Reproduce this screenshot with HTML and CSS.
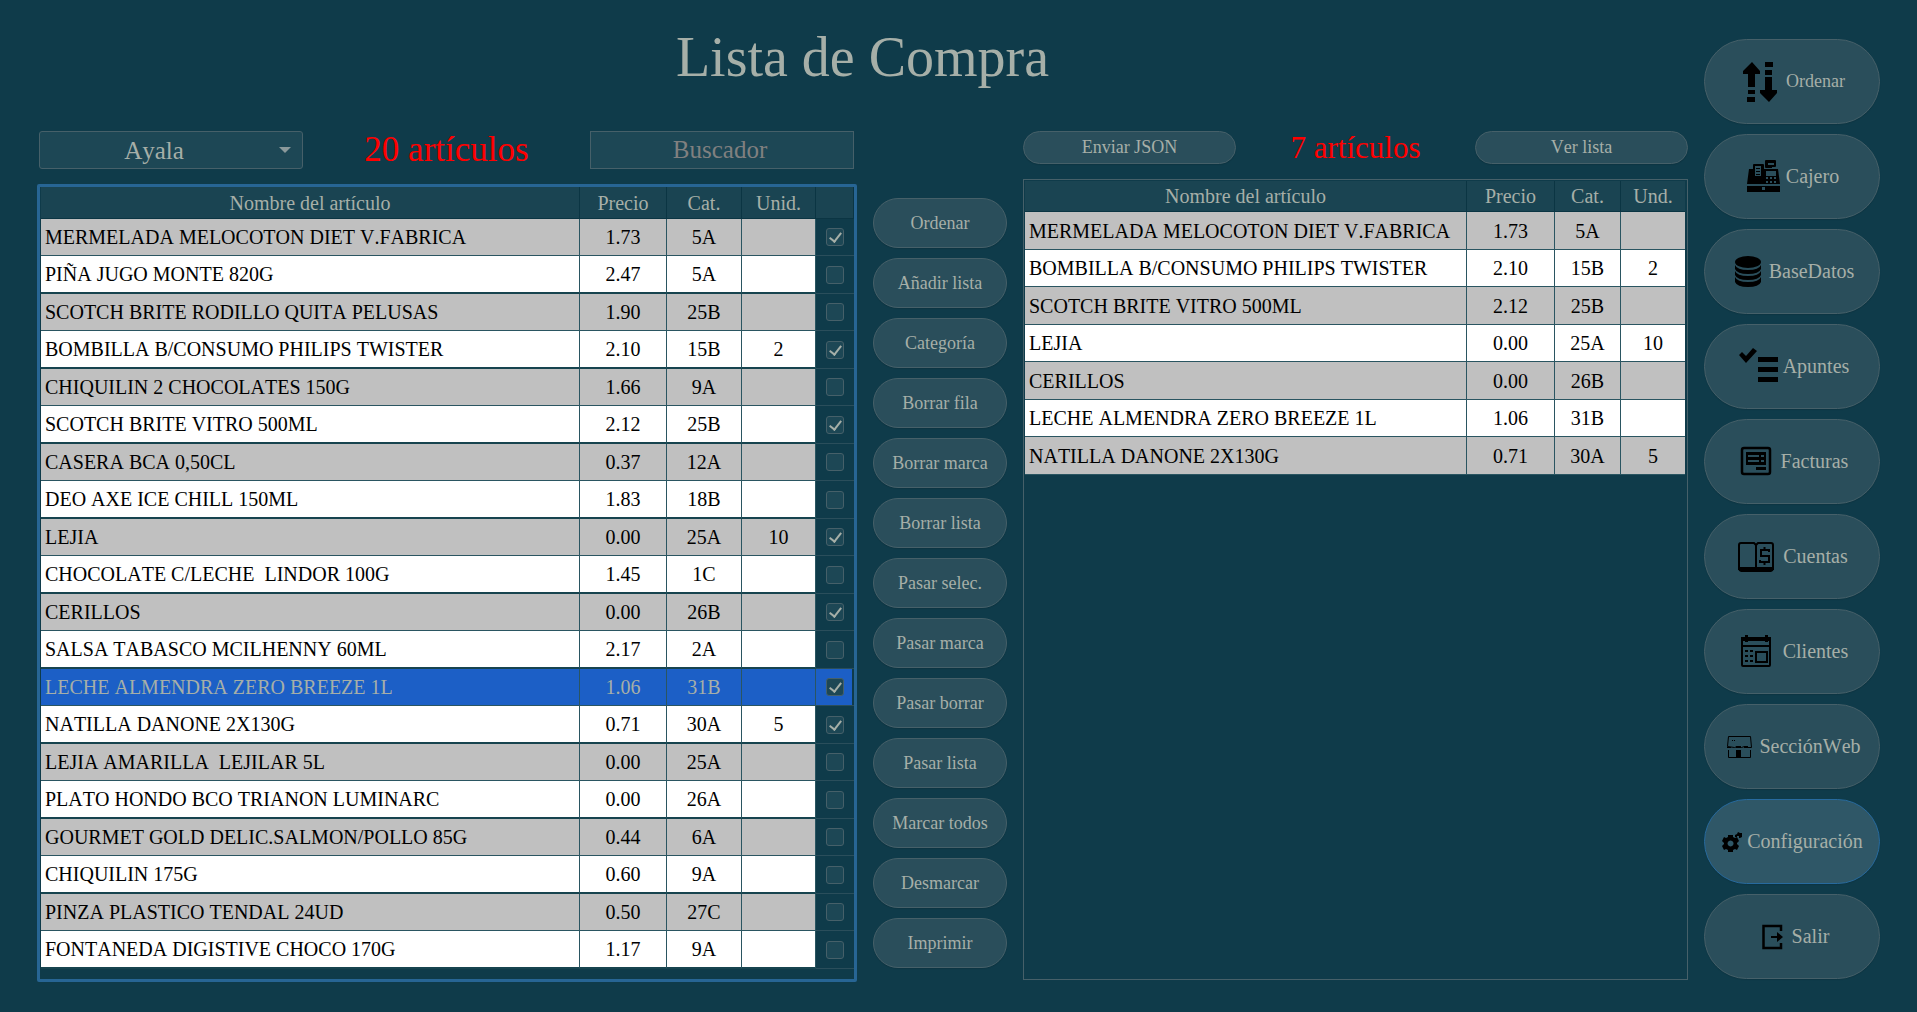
FILE: index.html
```
<!doctype html>
<html lang="es">
<head>
	<meta charset="utf-8">
	<title>Lista de Compra</title>
	<link rel="stylesheet" href="styles.css">
</head>
<body>
	<div class="page">
		<main class="main">
			<h1>Lista de Compra</h1>
			<div class="columns">

				<section class="panel">
					<div class="toolbar toolbar-left">
						<div class="combo">
							<select aria-label="Supermercado">
								<option>Ayala</option>
							</select>
						</div>
						<span class="count count-big">20 artículos</span>
						<input class="search" type="text" placeholder="Buscador" aria-label="Buscador">
					</div>
					<div class="table-box focused">
						<table class="articles">
							<colgroup>
								<col>
								<col class="c-price">
								<col class="c-cat">
								<col class="c-units">
								<col class="c-check">
							</colgroup>
							<thead>
								<tr><th>Nombre del artículo</th><th>Precio</th><th>Cat.</th><th>Unid.</th><th></th></tr>
							</thead>
							<tbody>
								<tr><td>MERMELADA MELOCOTON DIET V.FABRICA</td><td>1.73</td><td>5A</td><td></td><td><input type="checkbox" aria-label="Marcar" checked></td></tr>
								<tr><td>PIÑA JUGO MONTE 820G</td><td>2.47</td><td>5A</td><td></td><td><input type="checkbox" aria-label="Marcar"></td></tr>
								<tr><td>SCOTCH BRITE RODILLO QUITA PELUSAS</td><td>1.90</td><td>25B</td><td></td><td><input type="checkbox" aria-label="Marcar"></td></tr>
								<tr><td>BOMBILLA B/CONSUMO PHILIPS TWISTER</td><td>2.10</td><td>15B</td><td>2</td><td><input type="checkbox" aria-label="Marcar" checked></td></tr>
								<tr><td>CHIQUILIN 2 CHOCOLATES 150G</td><td>1.66</td><td>9A</td><td></td><td><input type="checkbox" aria-label="Marcar"></td></tr>
								<tr><td>SCOTCH BRITE VITRO 500ML</td><td>2.12</td><td>25B</td><td></td><td><input type="checkbox" aria-label="Marcar" checked></td></tr>
								<tr><td>CASERA BCA 0,50CL</td><td>0.37</td><td>12A</td><td></td><td><input type="checkbox" aria-label="Marcar"></td></tr>
								<tr><td>DEO AXE ICE CHILL 150ML</td><td>1.83</td><td>18B</td><td></td><td><input type="checkbox" aria-label="Marcar"></td></tr>
								<tr><td>LEJIA</td><td>0.00</td><td>25A</td><td>10</td><td><input type="checkbox" aria-label="Marcar" checked></td></tr>
								<tr><td>CHOCOLATE C/LECHE  LINDOR 100G</td><td>1.45</td><td>1C</td><td></td><td><input type="checkbox" aria-label="Marcar"></td></tr>
								<tr><td>CERILLOS</td><td>0.00</td><td>26B</td><td></td><td><input type="checkbox" aria-label="Marcar" checked></td></tr>
								<tr><td>SALSA TABASCO MCILHENNY 60ML</td><td>2.17</td><td>2A</td><td></td><td><input type="checkbox" aria-label="Marcar"></td></tr>
								<tr class="selected"><td>LECHE ALMENDRA ZERO BREEZE 1L</td><td>1.06</td><td>31B</td><td></td><td><input type="checkbox" aria-label="Marcar" checked></td></tr>
								<tr><td>NATILLA DANONE 2X130G</td><td>0.71</td><td>30A</td><td>5</td><td><input type="checkbox" aria-label="Marcar" checked></td></tr>
								<tr><td>LEJIA AMARILLA  LEJILAR 5L</td><td>0.00</td><td>25A</td><td></td><td><input type="checkbox" aria-label="Marcar"></td></tr>
								<tr><td>PLATO HONDO BCO TRIANON LUMINARC</td><td>0.00</td><td>26A</td><td></td><td><input type="checkbox" aria-label="Marcar"></td></tr>
								<tr><td>GOURMET GOLD DELIC.SALMON/POLLO 85G</td><td>0.44</td><td>6A</td><td></td><td><input type="checkbox" aria-label="Marcar"></td></tr>
								<tr><td>CHIQUILIN 175G</td><td>0.60</td><td>9A</td><td></td><td><input type="checkbox" aria-label="Marcar"></td></tr>
								<tr><td>PINZA PLASTICO TENDAL 24UD</td><td>0.50</td><td>27C</td><td></td><td><input type="checkbox" aria-label="Marcar"></td></tr>
								<tr><td>FONTANEDA DIGISTIVE CHOCO 170G</td><td>1.17</td><td>9A</td><td></td><td><input type="checkbox" aria-label="Marcar"></td></tr>
							</tbody>
						</table>
					</div>
				</section>

				<div class="actions">
					<button type="button">Ordenar</button>
					<button type="button">Añadir lista</button>
					<button type="button">Categoría</button>
					<button type="button">Borrar fila</button>
					<button type="button">Borrar marca</button>
					<button type="button">Borrar lista</button>
					<button type="button">Pasar selec.</button>
					<button type="button">Pasar marca</button>
					<button type="button">Pasar borrar</button>
					<button type="button">Pasar lista</button>
					<button type="button">Marcar todos</button>
					<button type="button">Desmarcar</button>
					<button type="button">Imprimir</button>
				</div>

				<section class="panel">
					<div class="toolbar toolbar-right">
						<button type="button">Enviar JSON</button>
						<span class="count">7 artículos</span>
						<button type="button">Ver lista</button>
					</div>
					<div class="table-box">
						<table class="list">
							<colgroup>
								<col>
								<col class="c-price">
								<col class="c-cat">
								<col class="c-units">
							</colgroup>
							<thead>
								<tr><th>Nombre del artículo</th><th>Precio</th><th>Cat.</th><th>Und.</th></tr>
							</thead>
							<tbody>
								<tr><td>MERMELADA MELOCOTON DIET V.FABRICA</td><td>1.73</td><td>5A</td><td></td></tr>
								<tr><td>BOMBILLA B/CONSUMO PHILIPS TWISTER</td><td>2.10</td><td>15B</td><td>2</td></tr>
								<tr><td>SCOTCH BRITE VITRO 500ML</td><td>2.12</td><td>25B</td><td></td></tr>
								<tr><td>LEJIA</td><td>0.00</td><td>25A</td><td>10</td></tr>
								<tr><td>CERILLOS</td><td>0.00</td><td>26B</td><td></td></tr>
								<tr><td>LECHE ALMENDRA ZERO BREEZE 1L</td><td>1.06</td><td>31B</td><td></td></tr>
								<tr><td>NATILLA DANONE 2X130G</td><td>0.71</td><td>30A</td><td>5</td></tr>
							</tbody>
						</table>
					</div>
				</section>

			</div>
		</main>

		<nav class="menu">
			<button type="button" class="small">
				<svg width="42" height="40" viewBox="0 0 42 40"><path d="M13 0l8 9v3h-5v13H9V12H4V9zM9 28h7v4H9zM8 35h8v5H8zM26 0h8v5h-8zM26 8h7v5h-7zM26 15h7v13h5v3l-8 9-9-9v-3h5z"/></svg>
				Ordenar
			</button>
			<button type="button">
				<svg width="36" height="33" viewBox="0 0 36 33"><path fill-rule="evenodd" d="M4 9h4V5q0-1 1-1h9q1 0 1 1v4h14l2 15H2zM10 6v10h6V6zM21 11v5h10v-5zM21 17v2h2v-2zM25 17v2h2v-2zM29 17v2h2v-2zM21 21v2h2v-2zM25 21v2h2v-2zM29 21v2h2v-2z"/><path d="M11 8h4v1h-4zM11 11h4v1h-4zM11 14h4v1h-4z"/><path fill-rule="evenodd" d="M21 0h9q1 0 1 1v5q0 1-1 1h-3v1h-6q-1 0-1-1V1q0-1 1-1zM23 3v2h6V3zM2 26h33v6H2zM17 27v3h3v-3z"/></svg>
				Cajero
			</button>
			<button type="button">
				<svg width="34" height="32" viewBox="0 0 34 32"><ellipse cx="18" cy="6" rx="13" ry="6"/><path d="M5 9q2 5 13 5t13-5v4q-2 5-13 5T5 13zM5 15q2 5 13 5t13-5v4q-2 5-13 5T5 19zM5 21q2 5 13 5t13-5v5q-2 5-13 5T5 26z"/></svg>
				BaseDatos
			</button>
			<button type="button">
				<svg width="43" height="40" viewBox="0 0 43 40"><path d="M4 8l3-3 4 4 7-8 4 3-11 12zM23 10h20v5H23zM23 20h20v5H23zM23 30h20v5H23z"/></svg>
				Apuntes
			</button>
			<button type="button">
				<svg width="40" height="32" viewBox="0 0 40 32"><rect x="6" y="2" width="28" height="26" rx="2" fill="none" stroke="#000" stroke-width="2.5"/><path fill-rule="evenodd" d="M10 6h20v13H10zM12 9v2h11V9zM25 9v2h3V9zM12 14v2h11v-2zM25 14v2h3v-2zM20 21h10v3H20z"/></svg>
				Facturas
			</button>
			<button type="button">
				<svg width="42" height="32" viewBox="0 0 42 32"><path d="M3 28V4q0-2 2-2h13l2 2 2-2h13q2 0 2 2v24M20 4v23M2 28h36" fill="none" stroke="#000" stroke-width="2"/><path d="M2 26h36v2q-1 3-3 3H5q-2 0-3-3z"/><path d="M33 11v-2h-8v6h8v6h-9v-2M28.500 6v3M28.500 21v3" fill="none" stroke="#000" stroke-width="2"/></svg>
				Cuentas
			</button>
			<button type="button">
				<svg width="42" height="36" viewBox="0 0 42 36"><path d="M6 5h28v26q0 1-1 1H7q-1 0-1-1z M6 12h28M20 18h11v10H20z" fill="none" stroke="#000" stroke-width="2"/><path d="M5 3h30v4H5zM9 1h3v7H9zM29 1h3v7h-3zM9 16h3v2H9zM14 16h3v2h-3zM9 21h3v2H9zM14 21h3v2h-3zM9 26h3v2H9zM14 26h3v2h-3z"/></svg>
				Clientes
			</button>
			<button type="button">
				<svg width="31" height="30" viewBox="0 0 31 30"><path d="M5.500 4.500h22l1 11h-5l-2-1-3 1-4-1-3 1-7-1zM5.500 18v7.500h22V18" fill="none" stroke="#000"/><path d="M13 18h5v7h-5zM9 8h1v1H9zM11 8h1v1h-1zM4 15h4v1H4zM13 14h5v2h-5zM21 14h4v2h-4z"/></svg>
				SecciónWeb
			</button>
			<button type="button" class="hover">
				<svg width="21" height="20" viewBox="0 0 21 20"><path fill-rule="evenodd" d="M7 3h5v2l2 1 2-1 2 4-2 2v1l2 2-2 4-2-1-2 1v2H7v-2l-2-1-2 1-2-4 2-2v-1L1 9l2-4 2 1 2-1zM9.500 8.500a3 3 0 1 0 .1 0z"/><path d="M14 3l2-1 1-2 2 1h2v4l-2 1h-1V4h-2v1h-2z"/></svg>
				Configuración
			</button>
			<button type="button">
				<svg width="32" height="26" viewBox="0 0 32 26"><path d="M26 7V2H8.500v22H26v-5" fill="none" stroke="#000" stroke-width="2.500"/><path d="M16 12h6V8l6 5-6 5v-4h-6z"/></svg>
				Salir
			</button>
		</nav>
	</div>
</body>
</html>
```
FILE: styles.css
```
*,
*:before,
*:after {
	box-sizing: border-box;
}

body {
	margin: 0;
	background-color: #0f3b4a;
	color: #a6afa8;
	font-family: "Liberation Serif", "Times New Roman", serif;
	font-size: 20px;
	font-kerning: none;
}

.page {
	display: flex;
	gap: 16px;
	min-height: 100vh;
	padding: 25px 37px 30px;
}

.main {
	flex: 1;
	display: flex;
	flex-direction: column;
	gap: 42px;
	min-width: 0;
}

h1 {
	margin: 0;
	font-size: 56px;
	font-weight: normal;
	line-height: 64px;
	text-align: center;
}

.columns {
	flex: 1;
	display: grid;
	grid-template-columns: minmax(0, 820fr) 134px minmax(0, 665fr);
	gap: 16px;
}

.panel {
	display: flex;
	flex-direction: column;
	gap: 15px;
}

/* buttons */
button {
	border: 1px solid #466069;
	border-radius: 50px;
	background-color: #2a4e5b;
	box-shadow: 0 1px 1px rgba(0, 0, 0, 0.1);
	color: inherit;
	font-family: inherit;
	font-kerning: none;
	font-size: 18px;
	padding: 0;
}

button.hover {
	background-color: #2f5767;
	border-color: #276a9e;
}

/* toolbars */
.toolbar {
	display: flex;
	align-items: center;
	justify-content: space-between;
}

.toolbar-left {
	height: 38px;
	padding: 0 3px 0 2px;
}

.toolbar-right {
	height: 33px;
}

.toolbar-right button {
	width: 32%;
	height: 33px;
}

.count {
	color: #f00;
	font-size: 31px;
}

.count-big {
	font-size: 35px;
}

.combo,
.search {
	width: 264px;
	height: 38px;
}

.combo {
	position: relative;
}

.combo select,
.search {
	border: 1px solid #466069;
	background-color: #1d4755;
	color: inherit;
	font-family: inherit;
	font-kerning: none;
	font-size: 25px;
	text-align: center;
}

.combo select {
	appearance: none;
	width: 100%;
	height: 100%;
	padding: 0 34px 0 0;
	border-radius: 3px;
	text-align-last: center;
}

.combo:after {
	content: "";
	position: absolute;
	right: 12px;
	top: 16px;
	border: 6px solid transparent;
	border-top: 6px solid #8b999b;
	border-bottom: 0;
}

.search {
	padding: 0 4px 0 0;
}

.search::placeholder {
	color: #808080;
	opacity: 1;
}

/* tables */
.table-box {
	flex: 1;
	margin-bottom: 2px;
	padding: 1px 2px 1px 1px;
	border: 1px solid #466069;
}

.table-box.focused {
	margin-bottom: 0;
	padding: 0 0 0 1px;
	border: 3px solid #276594;
	border-radius: 2px;
}

table {
	width: 100%;
	table-layout: fixed;
	border-collapse: separate;
	border-spacing: 0;
}

.c-price {
	width: 88px;
}

.c-cat {
	width: 66px;
}

.c-units {
	width: 64px;
}

.articles .c-price {
	width: 87px;
}

.articles .c-cat {
	width: 75px;
}

.articles .c-units {
	width: 74px;
}

.c-check {
	width: 38px;
}

th {
	height: 31px;
	padding: 0;
	border-right: 1px solid #0b3543;
	border-bottom: 1px solid #0b3543;
	background-color: #1a4452;
	font-weight: normal;
	line-height: 24px;
}

.articles th {
	height: 32px;
}

td {
	height: 38px;
	padding: 0;
	border-right: 1px solid #2a5561;
	border-bottom: 1px solid #2a5561;
	background-color: #fff;
	color: #000;
	line-height: 24px;
	text-align: center;
	white-space: pre;
}

td:first-child {
	padding-left: 4px;
	text-align: left;
}

tr:nth-child(odd) td {
	background-color: #c0c0c0;
}

.list tr:nth-child(even) td {
	height: 37px;
}

.articles tr:nth-child(odd) td {
	height: 37px;
}

.articles tr:nth-child(even) td {
	border-bottom: 2px solid #17444f;
}

.articles tbody tr td:last-child {
	border-right: 0;
	border-bottom: 1px solid #2a4e5b;
	background-color: transparent;
}

.list td:last-child,
.list th:last-child {
	border-right: 0;
}

.articles tbody tr.selected td {
	background-color: #1c5fc6;
	color: #a6afa8;
}

/* the selection stops short of the frame */
.articles tbody tr.selected td:last-child {
	box-shadow: inset -2px 0 #0f3b4a;
}

input[type=checkbox] {
	appearance: none;
	display: block;
	position: relative;
	width: 18px;
	height: 18px;
	margin: 0 auto;
	border: 1px solid #466069;
	border-radius: 3px;
	background-color: #1d4755;
}

input[type=checkbox]:checked:before {
	content: "";
	position: absolute;
	left: 5px;
	top: 1px;
	width: 7px;
	height: 12px;
	border: solid #a6afa8;
	border-width: 0 2px 2px 0;
	transform: rotate(38deg);
}

/* middle buttons */
.actions {
	display: flex;
	flex-direction: column;
	gap: 10px;
	padding-top: 67px;
}

.actions button {
	height: 50px;
}

/* right menu */
.menu {
	display: flex;
	flex-direction: column;
	gap: 10px;
	width: 176px;
	padding-top: 14px;
}

.menu button {
	display: flex;
	align-items: center;
	justify-content: center;
	gap: 5px;
	height: 85px;
	font-size: 20px;
}

.menu button.small {
	font-size: 18px;
}
```
